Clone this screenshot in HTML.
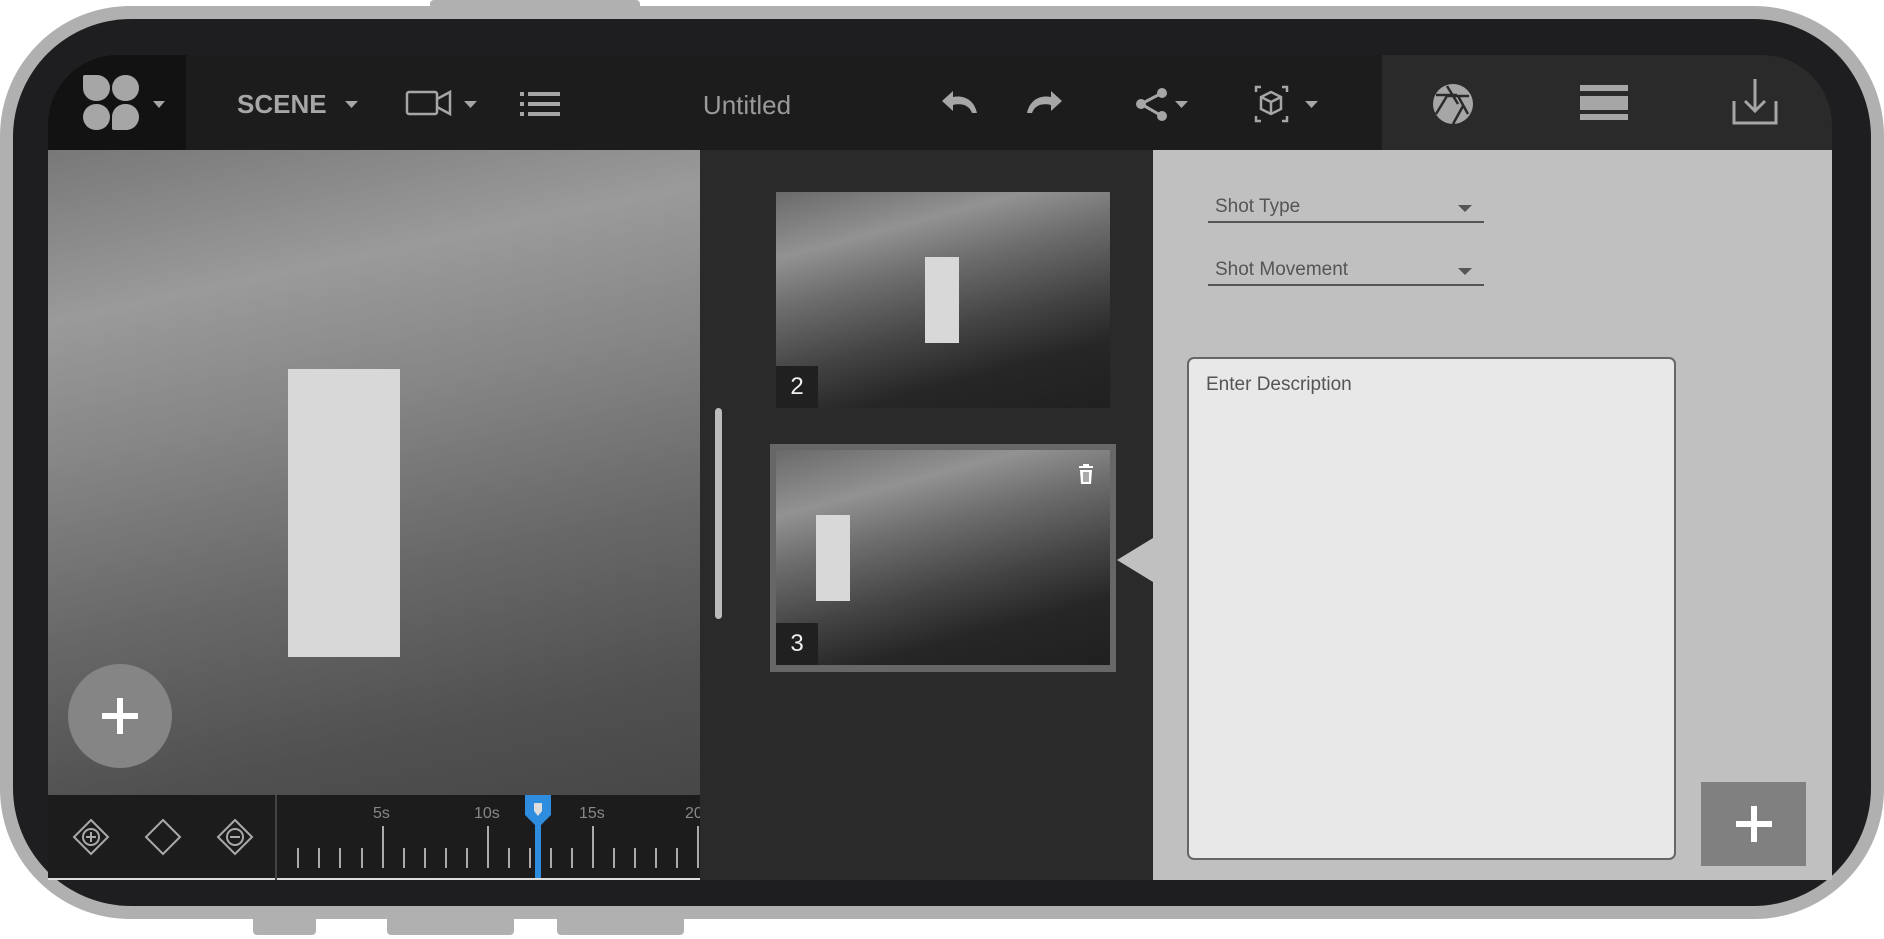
<!DOCTYPE html>
<html><head><meta charset="utf-8"><style>
*{margin:0;padding:0;box-sizing:border-box}
body{width:1884px;height:939px;background:#fff;position:relative;overflow:hidden;font-family:"Liberation Sans",sans-serif}
.abs{position:absolute}
.thumb{position:absolute;background:linear-gradient(165deg,#6a6a6a 0%,#929292 22%,#6e6e6e 38%,#444 60%,#262626 78%,#202020 100%)}
.lbl{position:absolute;left:0;bottom:0;width:42px;height:42px;background:#202020;color:#eee;font-size:24px;text-align:center;line-height:42px}
.tick{position:absolute;width:2px;background:#aaa;bottom:10px}
.tl{position:absolute;top:10px;color:#888;font-size:16px}
.pt{position:absolute;width:27px;height:26px;background:#a6a6a6}
</style></head><body>
<div class="abs" style="left:430px;top:0;width:210px;height:14px;background:#b0b0b0;border-radius:4px"></div>
<div class="abs" style="left:253px;top:910px;width:63px;height:25px;background:#b0b0b0;border-radius:4px"></div>
<div class="abs" style="left:387px;top:910px;width:127px;height:25px;background:#b0b0b0;border-radius:4px"></div>
<div class="abs" style="left:557px;top:910px;width:127px;height:25px;background:#b0b0b0;border-radius:4px"></div>
<div class="abs" style="left:0;top:6px;width:1884px;height:913px;background:#b0b0b0;border-radius:130px"></div>
<div class="abs" style="left:13px;top:19px;width:1858px;height:887px;background:#1e1e20;border-radius:118px"></div>
<div class="abs" style="left:48px;top:55px;width:1784px;height:825px;overflow:hidden;border-radius:70px 70px 0 70px;background:#1c1c1c">
 <div class="abs" style="left:0;top:0;width:1784px;height:95px;background:#1c1c1c"></div>
 <div class="abs" style="left:0;top:0;width:138px;height:95px;background:#121212"></div>
 <div class="abs" style="left:1334px;top:0;width:450px;height:95px;background:#2a2a2a"></div>
</div>
<!-- logo -->
<div class="pt" style="left:83px;top:75px;border-radius:2px 14px 14px 14px"></div>
<div class="pt" style="left:112px;top:75px;border-radius:14px 14px 14px 14px"></div>
<div class="pt" style="left:83px;top:104px;border-radius:14px 14px 14px 14px"></div>
<div class="pt" style="left:112px;top:104px;border-radius:14px 14px 14px 2px"></div>
<svg class="abs" style="left:0;top:0" width="1884" height="160">
 <g fill="#a6a6a6">
  <path d="M153 101 h12 l-6 7z"/>
  <path d="M345 101 h13 l-6.5 7z"/>
  <path d="M464 101 h13 l-6.5 7z"/>
  <path d="M1175 101 h13 l-6.5 7z"/>
  <path d="M1305 101 h13 l-6.5 7z"/>
 </g>
 <text x="237" y="113" fill="#a6a6a6" font-size="26" font-weight="bold" font-family="Liberation Sans">SCENE</text>
 <rect x="407" y="92" width="30" height="22" rx="2" fill="none" stroke="#a6a6a6" stroke-width="2.5"/>
 <path d="M437 99 l13 -7 v22 l-13 -7" fill="none" stroke="#a6a6a6" stroke-width="2.5"/>
 <g fill="#a6a6a6"><rect x="520" y="92" width="4" height="4"/><rect x="528" y="92" width="32" height="4"/><rect x="520" y="102" width="4" height="4"/><rect x="528" y="102" width="32" height="4"/><rect x="520" y="112" width="4" height="4"/><rect x="528" y="112" width="32" height="4"/></g>
 <text x="747" y="114" fill="#9a9a9a" font-size="26" text-anchor="middle" font-family="Liberation Sans">Untitled</text>
 <path d="M942 101 l11 -10 v6 c10 -2 21 2 24 16 l-5 0 c-3 -8 -10 -10 -19 -8 v6z" fill="#a6a6a6"/>
 <path d="M1062 101 l-11 -10 v6 c-10 -2 -21 2 -24 16 l5 0 c3 -8 10 -10 19 -8 v6z" fill="#a6a6a6"/>
 <g fill="#a6a6a6"><circle cx="1162" cy="93" r="5"/><circle cx="1141" cy="104" r="5"/><circle cx="1162" cy="116" r="5"/></g>
 <path d="M1162 93 L1141 104 L1162 116" stroke="#a6a6a6" stroke-width="3" fill="none"/>
 <g stroke="#a6a6a6" stroke-width="2.5" fill="none">
  <path d="M1256 92 v-5 h5 M1282 87 h5 v5 M1287 116 v5 h-5 M1261 121 h-5 v-5"/>
  <path d="M1271 92 l10 5 v12 l-10 5 l-10 -5 v-12z M1261 97 l10 5 l10 -5 M1271 102 v12"/>
 </g>
 <circle cx="1453" cy="104" r="20" fill="#a6a6a6"/>
 <g stroke="#2a2a2a" stroke-width="2.5"><path d="M1447 86 l11 18 M1469 96 l-21 0 M1468 114 l-10 -18 M1453 124 l10 -18 M1436 114 l11 -18 M1436 95 l21 0"/></g>
 <g fill="#a6a6a6"><rect x="1580" y="85" width="48" height="6"/><rect x="1580" y="96" width="48" height="14"/><rect x="1580" y="114" width="48" height="6"/></g>
 <g stroke="#a6a6a6" stroke-width="3" fill="none"><path d="M1734 101 v22 h42 v-22"/><path d="M1755 79 v32 M1745 101 l10 10 l10 -10"/></g>
</svg>
<div class="abs" style="left:48px;top:150px;width:652px;height:645px;background:linear-gradient(168deg,#787878 0%,#9a9a9a 22%,#868686 40%,#696969 62%,#505050 85%,#474747 100%)"></div>
<div class="abs" style="left:288px;top:369px;width:112px;height:288px;background:#d8d8d8"></div>
<div class="abs" style="left:68px;top:664px;width:104px;height:104px;border-radius:50%;background:#858585"></div>
<div class="abs" style="left:102px;top:713px;width:36px;height:6px;background:#fff"></div>
<div class="abs" style="left:117px;top:698px;width:6px;height:36px;background:#fff"></div>
<div class="abs" style="left:48px;top:795px;width:652px;height:85px;background:#1c1c1c;border-bottom:2px solid #ddd"></div>
<div class="abs" style="left:275px;top:795px;width:2px;height:85px;background:#444"></div>
<svg class="abs" style="left:48px;top:795px" width="228" height="85">
 <g stroke="#aaa" stroke-width="2" fill="none">
  <path d="M43 25 l17 17 l-17 17 l-17 -17z"/><circle cx="43" cy="42" r="8"/><path d="M43 37 v10 M38 42 h10"/>
  <path d="M115 25 l17 17 l-17 17 l-17 -17z"/>
  <path d="M187 25 l17 17 l-17 17 l-17 -17z"/><circle cx="187" cy="42" r="8"/><path d="M182 42 h10"/>
 </g>
</svg>
<div class="abs" style="left:277px;top:795px;width:423px;height:83px;overflow:hidden">
 <div class="tl" style="left:96px">5s</div><div class="tl" style="left:197px">10s</div><div class="tl" style="left:302px">15s</div><div class="tl" style="left:408px">20</div>
 <div class="tick" style="left:20px;height:20px"></div><div class="tick" style="left:41px;height:20px"></div><div class="tick" style="left:62px;height:20px"></div><div class="tick" style="left:84px;height:20px"></div>
 <div class="tick" style="left:105px;height:42px"></div>
 <div class="tick" style="left:126px;height:20px"></div><div class="tick" style="left:147px;height:20px"></div><div class="tick" style="left:168px;height:20px"></div><div class="tick" style="left:189px;height:20px"></div>
 <div class="tick" style="left:210px;height:42px"></div>
 <div class="tick" style="left:231px;height:20px"></div><div class="tick" style="left:252px;height:20px"></div><div class="tick" style="left:273px;height:20px"></div><div class="tick" style="left:294px;height:20px"></div>
 <div class="tick" style="left:315px;height:42px"></div>
 <div class="tick" style="left:336px;height:20px"></div><div class="tick" style="left:357px;height:20px"></div><div class="tick" style="left:378px;height:20px"></div><div class="tick" style="left:399px;height:20px"></div>
 <div class="tick" style="left:420px;height:42px"></div>
 <svg class="abs" style="left:247px;top:0" width="28" height="85"><path d="M1 0 h26 v20 l-10 10 v55 h-6 v-55 l-10 -10z" fill="#2f8de0"/><path d="M10 8 h8 v8 l-4 5 l-4 -5z" fill="#ddd"/></svg>
</div>
<div class="abs" style="left:700px;top:795px;width:6px;height:85px;background:#2a2a2a"></div>
<div class="abs" style="left:700px;top:150px;width:453px;height:730px;background:#2a2a2a"></div>
<div class="abs" style="left:715px;top:408px;width:7px;height:211px;background:#bbb;border-radius:4px"></div>
<div class="thumb" style="left:776px;top:192px;width:334px;height:216px"><div class="abs" style="left:149px;top:65px;width:34px;height:86px;background:#d8d8d8"></div><div class="lbl">2</div></div>
<div class="abs" style="left:770px;top:444px;width:346px;height:228px;background:#676767"></div>
<div class="thumb" style="left:776px;top:450px;width:334px;height:215px"><div class="abs" style="left:40px;top:65px;width:34px;height:86px;background:#d8d8d8"></div><div class="lbl">3</div>
 <svg class="abs" style="left:298px;top:12px" width="24" height="24"><path d="M5 5 h14 M10 5 v-2 h4 v2" stroke="#fff" stroke-width="2" fill="none"/><path d="M6 8 h12 l-1 14 h-10z" fill="#fff"/><path d="M10 10 v10 M12 10 v10 M14 10 v10" stroke="#555" stroke-width="1"/></svg>
</div>
<div class="abs" style="left:1153px;top:150px;width:679px;height:730px;background:#c0c0c0"></div>
<svg class="abs" style="left:1117px;top:538px" width="40" height="44"><path d="M0 22 L36 0 V44z" fill="#c0c0c0"/></svg>
<div class="abs" style="left:1215px;top:196px;font-size:19px;color:#555">Shot Type</div>
<div class="abs" style="left:1208px;top:221px;width:276px;height:2px;background:#555"></div>
<svg class="abs" style="left:1458px;top:205px" width="14" height="8"><path d="M0 0h14l-7 7z" fill="#555"/></svg>
<div class="abs" style="left:1215px;top:259px;font-size:19px;color:#555">Shot Movement</div>
<div class="abs" style="left:1208px;top:284px;width:276px;height:2px;background:#555"></div>
<svg class="abs" style="left:1458px;top:268px" width="14" height="8"><path d="M0 0h14l-7 7z" fill="#555"/></svg>
<div class="abs" style="left:1187px;top:357px;width:489px;height:503px;background:#e8e8e8;border:2px solid #666;border-radius:7px"></div>
<div class="abs" style="left:1206px;top:374px;font-size:19px;color:#555">Enter Description</div>
<div class="abs" style="left:1701px;top:782px;width:105px;height:84px;background:#808080"></div>
<div class="abs" style="left:1736px;top:821px;width:36px;height:6px;background:#fff"></div>
<div class="abs" style="left:1751px;top:806px;width:6px;height:36px;background:#fff"></div>
</body></html>
